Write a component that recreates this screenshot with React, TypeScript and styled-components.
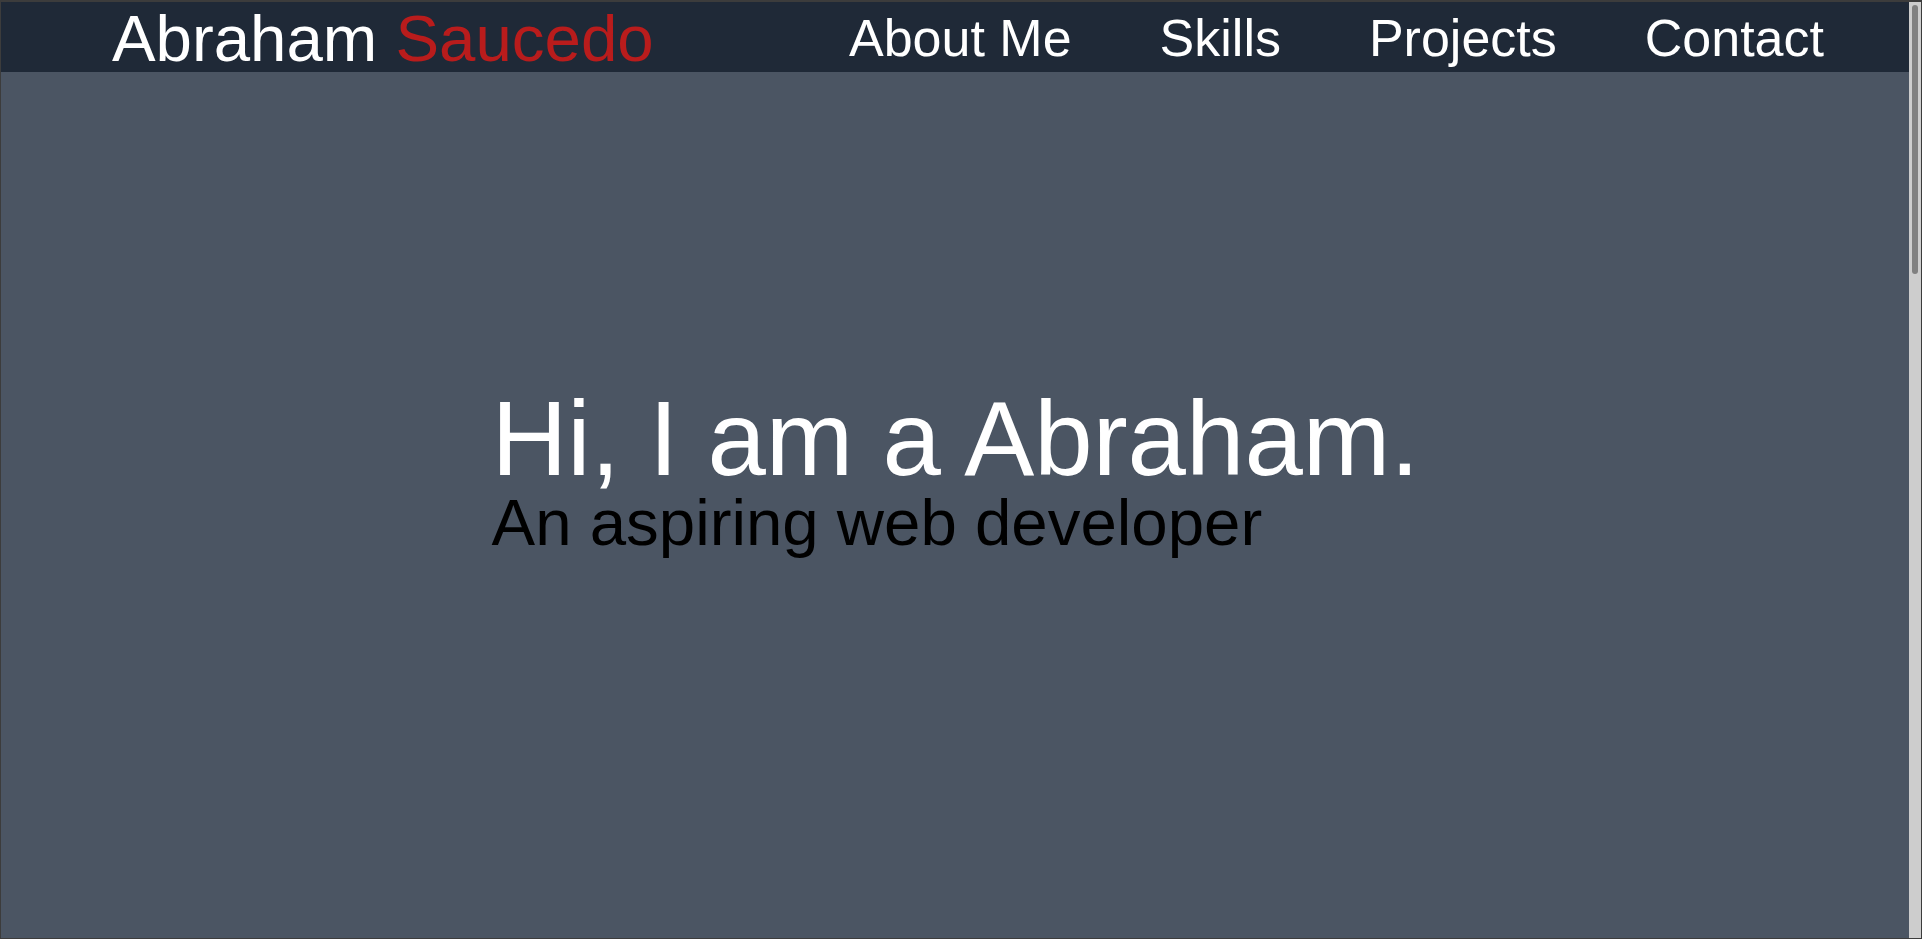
import React from "react";
import styled, { createGlobalStyle } from "styled-components";

const GlobalStyle = createGlobalStyle`
  html, body {
    margin: 0;
    padding: 0;
    background: #4b5563;
  }
  body {
    font-family: "Liberation Sans", Arial, Helvetica, sans-serif;
    padding: 0 12px 0 1px;
  }
  * { box-sizing: border-box; }
  ::-webkit-scrollbar {
    width: 0;
    height: 0;
  }
`;

const WindowFrame = styled.div`
  position: fixed;
  inset: 0;
  pointer-events: none;
  border-style: solid;
  border-color: #3c3c3c;
  border-width: 2px 1px 1px 1px;
  z-index: 30;
`;

const ScrollTrack = styled.div`
  position: fixed;
  top: 0;
  bottom: 0;
  right: 1px;
  width: 12px;
  background: #cdcdcd;
  padding: 5px 3px 0 3px;
  z-index: 20;
`;

const ScrollThumb = styled.div`
  width: 6px;
  height: 269px;
  border-radius: 3px;
  background: #808080;
`;

const Header = styled.header`
  position: fixed;
  top: 0;
  left: 0;
  right: 13px;
  height: 72px;
  padding: 4px 85px 0 112px;
  background: #1f2937;
  display: flex;
  align-items: center;
  justify-content: space-between;
  z-index: 10;
`;

const Logo = styled.div`
  font-size: 65.4px;
  line-height: 1;
  color: #ffffff;
  white-space: nowrap;
  padding-top: 2px;
`;

const Accent = styled.span`
  color: #b91c1c;
`;

const Nav = styled.nav`
  display: flex;
  align-items: center;
  gap: 88px;
`;

const NavLink = styled.a`
  font-size: 52px;
  line-height: 1;
  color: #ffffff;
  text-decoration: none;
  white-space: nowrap;
`;

const Hero = styled.section`
  min-height: 100vh;
  padding-top: 2px;
  display: flex;
  align-items: center;
  justify-content: center;
`;

const HeroText = styled.div`
  display: flex;
  flex-direction: column;
  align-items: flex-start;
`;

const Title = styled.h1`
  margin: 0;
  font-size: 105px;
  line-height: 1;
  font-weight: 400;
  color: #ffffff;
  white-space: nowrap;
`;

const Subtitle = styled.h2`
  margin: -1px 0 0;
  font-size: 65.4px;
  line-height: 1;
  font-weight: 400;
  color: #000000;
  white-space: nowrap;
`;

const Section = styled.section`
  min-height: 575px;
`;

const links = [
  { href: "#about", label: "About Me" },
  { href: "#skills", label: "Skills" },
  { href: "#projects", label: "Projects" },
  { href: "#contact", label: "Contact" },
];

export default function App() {
  return (
    <>
      <GlobalStyle />
      <Header>
        <Logo>
          Abraham <Accent>Saucedo</Accent>
        </Logo>
        <Nav>
          {links.map((l) => (
            <NavLink key={l.href} href={l.href}>
              {l.label}
            </NavLink>
          ))}
        </Nav>
      </Header>
      <main>
        <Hero id="home">
          <HeroText>
            <Title>Hi, I am a Abraham.</Title>
            <Subtitle>An aspiring web developer</Subtitle>
          </HeroText>
        </Hero>
        <Section id="about" />
        <Section id="skills" />
        <Section id="projects" />
        <Section id="contact" />
      </main>
      <ScrollTrack>
        <ScrollThumb />
      </ScrollTrack>
      <WindowFrame />
    </>
  );
}
